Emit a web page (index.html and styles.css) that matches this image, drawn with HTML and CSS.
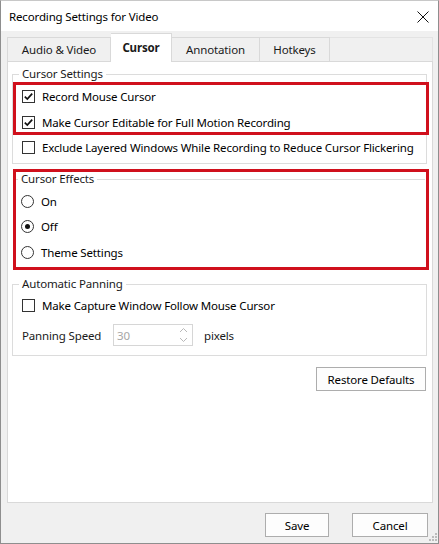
FILE: index.html
```html
<!DOCTYPE html>
<html lang="en">
<head>
  <meta charset="UTF-8">
  <title>Recording Settings for Video</title>
  <link rel="stylesheet" href="styles.css">
</head>
<body>

  <div class="window">
    <!-- Title bar -->
    <div class="titlebar">
      <span class="title">Recording Settings for Video</span>
      <span class="close">
        <svg width="12" height="12" viewBox="0 0 12 12"><path d="M0.5 0.5 L11.5 11.5 M11.5 0.5 L0.5 11.5" stroke="#111" stroke-width="1"/></svg>
      </span>
    </div>

    <div class="dialog-body">
      <!-- Tabs -->
      <div class="tabs">
        <div class="tab tab-first">Audio &amp; Video</div>
        <div class="tab active">Cursor</div>
        <div class="tab">Annotation</div>
        <div class="tab">Hotkeys</div>
        <div class="tab-fill"></div>
      </div>

      <div class="panel">
        <fieldset class="group group-settings">
          <legend>Cursor Settings</legend>
          <div class="highlight">
            <div class="row"><span class="check"><svg width="11" height="11" viewBox="0 0 11 11"><path d="M1.8 5.6 L4.3 8.1 L9.2 2.6" fill="none" stroke="#111" stroke-width="1.7"/></svg></span>Record Mouse Cursor</div>
            <div class="row"><span class="check"><svg width="11" height="11" viewBox="0 0 11 11"><path d="M1.8 5.6 L4.3 8.1 L9.2 2.6" fill="none" stroke="#111" stroke-width="1.7"/></svg></span>Make Cursor Editable for Full Motion Recording</div>
          </div>
          <div class="row row-plain"><span class="check"></span>Exclude Layered Windows While Recording to Reduce Cursor Flickering</div>
        </fieldset>

        <div class="highlight highlight-group">
          <fieldset class="group group-open">
            <legend>Cursor Effects</legend>
            <div class="radio-list">
              <div class="row"><span class="radio"></span>On</div>
              <div class="row"><span class="radio selected"></span>Off</div>
              <div class="row"><span class="radio"></span>Theme Settings</div>
            </div>
          </fieldset>
        </div>

        <fieldset class="group group-panning">
          <legend>Automatic Panning</legend>
          <div class="row row-plain"><span class="check"></span>Make Capture Window Follow Mouse Cursor</div>
          <div class="speed-row">
            <span class="speed-label">Panning Speed</span>
            <span class="spin">
              <span class="spin-value">30</span>
              <svg class="spin-arrows" width="9" height="16" viewBox="0 0 9 16"><path d="M1 5 L4.5 1.5 L8 5 M1 11 L4.5 14.5 L8 11" fill="none" stroke="#b8b8b8" stroke-width="1"/></svg>
            </span>
            <span>pixels</span>
          </div>
        </fieldset>

        <div class="restore-row">
          <button class="btn btn-restore">Restore Defaults</button>
        </div>
      </div>

      <!-- Footer buttons -->
      <div class="footer">
        <button class="btn btn-save">Save</button>
        <button class="btn btn-cancel">Cancel</button>
      </div>
    </div>

    <svg class="grip" width="8" height="8" viewBox="0 0 8 8">
      <rect x="6" y="0" width="2" height="2" fill="#bcbcbc"/>
      <rect x="3" y="3" width="2" height="2" fill="#bcbcbc"/>
      <rect x="6" y="3" width="2" height="2" fill="#bcbcbc"/>
      <rect x="0" y="6" width="2" height="2" fill="#bcbcbc"/>
      <rect x="3" y="6" width="2" height="2" fill="#bcbcbc"/>
      <rect x="6" y="6" width="2" height="2" fill="#bcbcbc"/>
    </svg>
  </div>

</body>
</html>
```

FILE: styles.css
```css
body {
  margin: 0;
  padding: 0;
  font-family: 'Noto Sans', 'Open Sans', sans-serif;
  font-size: 11.5px;
  letter-spacing: -0.15px;
  color: #000;
  background: #fff;
  white-space: nowrap;
}

.window {
  position: relative;
  width: 439px;
  height: 544px;
  box-sizing: border-box;
  border: 1px solid #8e8e8e;
  border-top-color: #c8c8c8;
  background: #f0f0f0;
  display: flex;
  flex-direction: column;
}

.titlebar {
  height: 30px;
  background: #fff;
  display: flex;
  align-items: center;
  justify-content: space-between;
  padding: 0 9px 0 8px;
}

.title {
  color: #000;
}

.close {
  display: flex;
  margin-top: 1px;
}

.dialog-body {
  flex: 1;
  display: flex;
  flex-direction: column;
  padding: 2px 5px 0 6px;
}

/* Tabs */
.tabs {
  display: flex;
  align-items: flex-end;
  height: 28px;
}

.tab {
  height: 24px;
  box-sizing: border-box;
  border-top: 1px solid #d9d9d9;
  border-right: 1px solid #d9d9d9;
  display: flex;
  align-items: center;
  justify-content: center;
  color: #1a1a1a;
}

.tab-first {
  border-left: 1px solid #d9d9d9;
  width: 104px;
}

.tab:nth-child(3) {
  width: 88px;
}

.tab:nth-child(4) {
  width: 70px;
}

.tab.active {
  position: relative;
  z-index: 1;
  width: 61px;
  height: 29px;
  margin-bottom: -1px;
  background: #fff;
  font-weight: bold;
  border-top: 1px solid #d9d9d9;
  padding-bottom: 1px;
}

.tab-fill {
  flex: 1;
  height: 24px;
  box-sizing: border-box;
  border-top: 1px solid #e3e3e3;
  border-right: 1px solid #e3e3e3;
}

.panel {
  height: 442px;
  box-sizing: border-box;
  background: #fff;
  border: 1px solid #d9d9d9;
  padding: 5px 5px 0 4px;
}

/* Group boxes */
.group {
  margin: 0;
  padding: 0;
  border: 1px solid #dcdcdc;
  min-width: 0;
}

.group legend {
  padding: 0 3px;
  margin-left: 6px;
  line-height: 14px;
  color: #1a1a1a;
}

.group-settings {
  padding-bottom: 6px;
}

.highlight {
  border: 3px solid #d0101c;
  margin: 1px -3px 2px 0;
  padding: 1px 0 0 6px;
  display: flex;
  flex-direction: column;
  gap: 6px;
}

.highlight-group {
  margin: 5px -2px 0 1px;
  padding: 0;
}

.group-open {
  border-left: none;
  border-right: none;
  border-bottom: none;
  margin-right: 1px;
}

.group-open legend {
  margin-left: 2px;
}

.radio-list {
  display: flex;
  flex-direction: column;
  gap: 5.5px;
  padding: 5px 0 5px 5px;
}

.row {
  height: 20px;
  display: flex;
  align-items: center;
  gap: 7px;
}

.row-plain {
  padding-left: 9px;
}

.check {
  width: 13px;
  height: 13px;
  box-sizing: border-box;
  border: 1px solid #333;
  background: #fff;
  display: flex;
  align-items: center;
  justify-content: center;
}

.radio {
  width: 13px;
  height: 13px;
  box-sizing: border-box;
  border: 1px solid #333;
  border-radius: 50%;
  background: #fff;
  display: flex;
  align-items: center;
  justify-content: center;
}

.radio.selected::after {
  content: "";
  width: 5px;
  height: 5px;
  border-radius: 50%;
  background: #111;
}

.group-panning {
  margin-top: 7px;
  padding: 4px 0 9px 0;
}

.speed-row {
  display: flex;
  align-items: center;
  padding-left: 9px;
  margin-top: 9px;
  color: #1a1a1a;
}

.speed-label {
  width: 91px;
}

.spin {
  width: 80px;
  height: 22px;
  box-sizing: border-box;
  border: 1px solid #d6d6d6;
  display: flex;
  align-items: center;
  justify-content: space-between;
  padding: 0 4px 0 3px;
  margin-right: 11px;
}

.spin-value {
  color: #a6a6a6;
}

.restore-row {
  display: flex;
  justify-content: flex-end;
  margin-top: 11px;
}

.btn {
  font-family: 'Noto Sans', 'Open Sans', sans-serif;
  font-size: 11.5px;
  letter-spacing: -0.15px;
  color: #000;
  height: 24px;
  background: #fdfdfd;
  border: 1px solid #adadad;
  padding: 0;
}

.btn-restore {
  width: 110px;
  margin-right: 1px;
}

.footer {
  display: flex;
  justify-content: flex-end;
  gap: 23px;
  padding: 10px 5px 0 0;
}

.btn-save {
  width: 64px;
}

.btn-cancel {
  width: 76px;
}

.grip {
  position: absolute;
  right: 1px;
  bottom: 2px;
}
```
